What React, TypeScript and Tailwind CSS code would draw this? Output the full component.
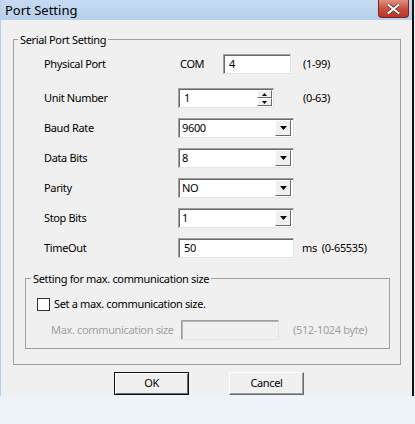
import React from 'react';

const font = { fontFamily: '"Noto Sans", "Liberation Sans", sans-serif' };

function Sunken({ className = '', children }: { className?: string; children?: React.ReactNode }) {
    return (
        <div className={`h-[20px] border border-t-[#a0a0a0] border-l-[#a0a0a0] border-b-[#e3e3e3] border-r-[#e3e3e3] shadow-[inset_1px_1px_0_#696969] bg-white flex items-center ${className}`}>
            {children}
        </div>
    );
}

function Arrow({ up = false, small = false }: { up?: boolean; small?: boolean }) {
    const w = small ? 5 : 7;
    const h = small ? 3 : 4;
    return (
        <svg width={w} height={h} viewBox={`0 0 ${w} ${h}`}>
            <polygon points={up ? `0,${h} ${w},${h} ${w / 2},0` : `0,0 ${w},0 ${w / 2},${h}`} fill="#000" />
        </svg>
    );
}

function Combo({ value }: { value: string }) {
    return (
        <Sunken className="w-[116px] pl-[3px] pr-[2px] justify-between">
            <span className="text-black">{value}</span>
            <div className="w-[16px] h-[16px] bg-[#f0f0f0] border border-t-white border-l-white border-b-[#696969] border-r-[#696969] flex items-center justify-center">
                <Arrow />
            </div>
        </Sunken>
    );
}

function Row({ label, children, first = false }: { label: string; children: React.ReactNode; first?: boolean }) {
    return (
        <div className={`flex items-center h-[20px] ${first ? '' : 'mt-[10px]'}`}>
            <span className="w-[134px]">{label}</span>
            {children}
        </div>
    );
}

export default function App() {
    return (
        <div className="w-[415px] h-[424px] bg-[#eef2f9] text-[11px] tracking-[-0.35px] text-black" style={font}>
            <div className="w-[414px] h-[396px] flex flex-col border-l border-l-[#b8d0ec] border-r-2 border-r-[#111]">
                {/* Title bar */}
                <div className="h-[20px] flex items-start justify-between bg-gradient-to-b from-[#c6dbf2] to-[#b7cfeb]">
                    <span className="pl-[4px] pt-[1px] text-[13px] tracking-normal leading-[18px] text-black">Port Setting</span>
                    <div className="mr-[3px] w-[31px] h-[18px] rounded-b-[4px] border border-t-0 border-[#6b2a25] bg-gradient-to-b from-[#e08f80] via-[#cd4f3c] to-[#bf3423] flex items-center justify-center">
                        <svg width="13" height="10" viewBox="0 0 13 10">
                            <path d="M1.5 1 L11.5 9 M11.5 1 L1.5 9" stroke="#5a2a2a" strokeWidth="3.4" strokeLinecap="square" />
                            <path d="M1.5 1 L11.5 9 M11.5 1 L1.5 9" stroke="#fff" strokeWidth="2" strokeLinecap="square" />
                        </svg>
                    </div>
                </div>

                {/* Client area */}
                <div className="flex-1 bg-[#f0f0f0] pl-[12px] pt-[12px]">
                    <fieldset className="w-[388px] h-[333px] border border-[#a0a0a0]">
                        <legend className="ml-[4px] px-[2px] leading-[15px]">Serial Port Setting</legend>

                        <div className="pl-[30px] pt-[7px]">
                            <Row label="Physical Port" first>
                                <span className="w-[45px] pl-[2px]">COM</span>
                                <Sunken className="w-[68px] pl-[5px]">4</Sunken>
                                <span className="ml-[12px]">(1-99)</span>
                            </Row>
                            <div className="flex items-center h-[20px] mt-[14px]">
                                <span className="w-[134px]">Unit Number</span>
                                <Sunken className="w-[96px] pl-[5px] pr-[1px] justify-between">
                                    <span>1</span>
                                    <div className="w-[15px] h-[16px] flex flex-col">
                                        <div className="h-[8px] bg-[#f0f0f0] border border-t-white border-l-white border-b-[#696969] border-r-[#696969] flex items-center justify-center">
                                            <Arrow up small />
                                        </div>
                                        <div className="h-[8px] bg-[#f0f0f0] border border-t-white border-l-white border-b-[#696969] border-r-[#696969] flex items-center justify-center">
                                            <Arrow small />
                                        </div>
                                    </div>
                                </Sunken>
                                <span className="ml-[29px]">(0-63)</span>
                            </div>
                            <Row label="Baud Rate"><Combo value="9600" /></Row>
                            <Row label="Data Bits"><Combo value="8" /></Row>
                            <Row label="Parity"><Combo value="NO" /></Row>
                            <Row label="Stop Bits"><Combo value="1" /></Row>
                            <Row label="TimeOut">
                                <Sunken className="w-[116px] pl-[5px]">50</Sunken>
                                <span className="ml-[8px]">ms</span>
                                <span className="ml-[5px]">(0-65535)</span>
                            </Row>
                        </div>

                        {/* Inner group */}
                        <fieldset className="ml-[11px] mt-[13px] w-[365px] h-[78px] border border-[#a0a0a0]">
                            <legend className="ml-[5px] px-[2px] leading-[15px]">Setting for max. communication size</legend>
                            <div className="pl-[11px] pt-[10px]">
                                <div className="flex items-center h-[16px]">
                                    <div className="w-[13px] h-[13px] bg-white border border-[#333]" />
                                    <span className="ml-[4px]">Set a max. communication size.</span>
                                </div>
                                <div className="flex items-center h-[20px] mt-[8px] text-[#a0a0a0]">
                                    <span className="ml-[14px] w-[130px] whitespace-nowrap">Max. communication size</span>
                                    <div className="w-[98px] h-[20px] border border-t-[#a0a0a0] border-l-[#a0a0a0] border-b-[#e3e3e3] border-r-[#e3e3e3] shadow-[inset_1px_1px_0_#b4b4b4] bg-[#f0f0f0]" />
                                    <span className="ml-[14px] whitespace-nowrap">(512-1024 byte)</span>
                                </div>
                            </div>
                        </fieldset>
                    </fieldset>

                    {/* Buttons */}
                    <div className="flex mt-[7px] ml-[101px] gap-[40px]">
                        <button className="w-[75px] h-[23px] bg-[#f0f0f0] border border-[#111] shadow-[inset_1px_1px_0_#fff,inset_-1px_-1px_0_#696969] text-black">OK</button>
                        <button className="w-[75px] h-[23px] bg-[#f0f0f0] border border-t-white border-l-white border-b-[#696969] border-r-[#696969] shadow-[inset_-1px_-1px_0_#a0a0a0] text-black">Cancel</button>
                    </div>
                </div>
            </div>
        </div>
    );
}
